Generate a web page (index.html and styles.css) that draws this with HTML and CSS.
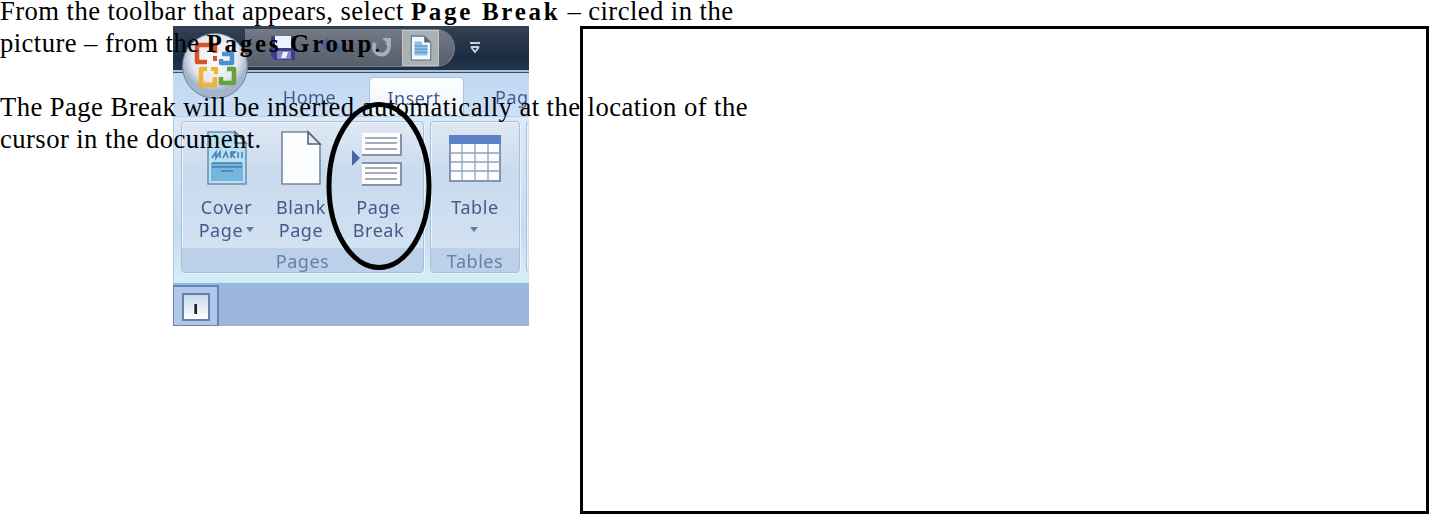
FILE: index.html
```html
<!DOCTYPE html>
<html lang="en">
<head>
<meta charset="utf-8">
<title>Inserting a Page Break</title>
<link rel="stylesheet" href="styles.css">
</head>
<body>
<main class="sheet">
  <section class="picture">
    <div class="screen">
    <header class="titlebar">
      <div class="quick">
        <svg class="save" width="28" height="28" viewBox="0 0 28 28"><path fill="#3c3c8c" d="M2 2h24v24H6l-4-4z"/><path fill="#eef2ff" d="M6 2h16v12H6z"/><path fill="#8585c2" d="M8 17h14v8H8z"/><path fill="#eef" d="M14 18h5l-2 6h-5z"/></svg>
        <svg class="undo" width="28" height="26" viewBox="0 0 28 26"><path fill="none" stroke="#4f609c" stroke-width="4" d="M6 9h10q7 0 6 10"/><path fill="#4f609c" d="M11 2v14L3 9z"/></svg>
        <svg class="redo" width="24" height="24" viewBox="0 0 24 24"><path fill="none" stroke="#a5afbe" stroke-width="4" d="M6 7a7.5 7.5 0 1 0 12-1"/><path fill="#a5afbe" d="M13 2h9v9z"/></svg>
        <span class="pinned"><svg width="22" height="26" viewBox="0 0 20 24"><path fill="#f3faff" stroke="#547386" d="M1 1h12l6 6v16H1z"/><path fill="#50687a" d="M13 1v6h6z"/><path fill="#8fc0e8" d="M4 6h7v3h5v10H4z"/><path stroke="#5f98cb" d="M4 10h12M4 13h12M4 16h12"/></svg></span>
      </div>
      <svg class="more" width="12" height="14" viewBox="0 0 12 14"><path fill="none" stroke="#c6d1df" stroke-width="2" d="M1 2h10M2 6h8M2 6l4 5 4-5"/></svg>
    </header>
    <nav class="tabs">
      <span class="tab">Home</span><span class="tab active">Insert</span><span class="tab last">Pag</span>
    </nav>
    <div class="ribbon">
      <div class="group pages">
        <div class="tools">
          <div class="tool">
            <svg width="42" height="56" viewBox="0 0 42 56"><path fill="#b9dff5" stroke="#6d8eaa" stroke-width="1.5" d="M2 2h27l11 11v41H2z"/><path fill="#e5f1fa" stroke="#596c82" stroke-width="1.5" d="M29 2v11h11z"/><path fill="#75b6df" d="M5 33h32v18H5z"/><path fill="none" stroke="#477da8" stroke-width="1.5" d="M6 28l4-6v6l4-6v6M17 28l3-6 2 6M25 28v-6h4l-3 3 3 3M32 28v-6M36 22v6M6 33h30M6 37h30M15 41h12"/></svg>
            <span>Cover<br>Page <i class="caret"></i></span>
          </div>
          <div class="tool blank">
            <svg width="42" height="56" viewBox="0 0 42 56"><path fill="#fcfdff" stroke="#77889d" stroke-width="1.6" d="M2 2h26l12 12v40H2z"/><path fill="#e4eaf4" stroke="#52647b" stroke-width="1.6" d="M28 2v12h12z"/></svg>
            <span>Blank<br>Page</span>
          </div>
          <div class="tool">
            <svg width="54" height="56" viewBox="0 0 54 56"><path fill="#fff" d="M10 3h38v22H10zM10 33h38v22H10z"/><path fill="none" stroke="#8493a6" stroke-width="2" d="M10 25h39V4M10 33h39v22H10"/><path stroke="#8792a2" stroke-width="1.5" d="M13 8h32M13 13h32M13 19h32M13 38h32M13 43h32M13 49h32"/><path fill="#4468a9" d="M0 20l8 8-8 8z"/></svg>
            <span>Page<br>Break</span>
          </div>
        </div>
        <div class="caption">Pages</div>
      </div>
      <div class="group tables">
        <div class="tools">
          <div class="tool">
            <svg width="54" height="56" viewBox="0 0 54 56"><path fill="#fbfcff" stroke="#65799b" stroke-width="1.5" d="M2 6h50v45H2z"/><path fill="#5b82c4" d="M1 5h52v9H1z"/><path fill="none" stroke="#93a1b9" stroke-width="1.3" d="M2 23h50M2 32h50M2 41h50M14 14v36M27 14v36M40 14v36"/></svg>
            <span>Table<br><i class="caret"></i></span>
          </div>
        </div>
        <div class="caption">Tables</div>
      </div>
      <div class="group next"></div>
    </div>
    <footer class="workspace"><div class="corner"><span>ı</span></div></footer>
    <svg class="orb" width="70" height="76" viewBox="0 0 70 76"><defs><radialGradient id="pearl" cy=".38"><stop offset="0" stop-color="#fff"/><stop offset=".72" stop-color="#e4e7ef"/><stop offset="1" stop-color="#a4b4cb"/></radialGradient></defs><circle cx="35" cy="38" r="32.5" fill="url(#pearl)" stroke="#6e7f9b"/><g fill="none" stroke-width="4.5" stroke-linejoin="round"><path stroke="#d8532b" d="M27 34H17V17h18v8"/><path stroke="#4d8fcf" d="M42 26h10v9H41v-4"/><path stroke="#edb532" d="M27 41h-6v16h14v-8"/><path stroke="#62a43c" d="M47 41h7v14H41v-6"/></g><g stroke-width="4"><path stroke="#d8532b" d="M35 28v5"/><path stroke="#edb532" d="M31 41h5v5"  fill="none"/></g></svg>
    </div>
    <svg class="ring" width="106" height="170" viewBox="0 0 106 170"><ellipse cx="53" cy="84" rx="50" ry="81.5" fill="none" stroke="#000" stroke-width="5"/></svg>
  </section>
  <section class="frame"></section>
  <article class="copy">
    <p class="first">From the toolbar that appears, select <b>Page Break</b> – circled in the</p>
    <p class="second">picture – from the <b>Pages Group</b>.</p>
    <p class="third">The Page Break will be inserted automatically at the location of the</p>
    <p class="fourth">cursor in the document.</p>
  </article>
</main>
</body>
</html>
```
FILE: styles.css
```css
* { box-sizing: border-box; }
body { margin: 0; background: #fff; }
.sheet { position: relative; width: 1431px; height: 517px; padding: 26px 0 0 173px; display: flex; gap: 51px; overflow: hidden; }
.picture { position: relative; width: 356px; height: 300px; flex: none; background: #c5dbf3; overflow: hidden; }
.screen { height: 300px; display: flex; flex-direction: column; font: 18px/23px "Noto Sans", "Open Sans", sans-serif; letter-spacing: .55px; color: #445a88; filter: blur(.45px); }
.frame { width: 849px; height: 488px; border: 3px solid #000; flex: none; }

.titlebar { height: 47px; flex: none; display: flex; align-items: center; padding: 0 0 3px 72px; background: linear-gradient(#354253, #1b2c42 65%, #22344c 93%, #afbdcb 94%, #afbdcb 97%, #3a4b63 97%); }
.quick { width: 210px; height: 38px; display: flex; align-items: center; padding-left: 24px; border-radius: 0 20px 20px 0; background: linear-gradient(#737985, #565e6c); border: 1px solid #768090; border-left: 0; }
.undo { margin-left: 20px; }
.redo { margin-left: 24px; }
.pinned { width: 37px; height: 36px; display: flex; align-items: center; justify-content: center; background: #abb0b5; border: 1px solid #c4c8cb; margin-left: 9px; }
.more { margin-left: 14px; }

.tabs { height: 43px; flex: none; display: flex; align-items: flex-end; padding-left: 77px; background: linear-gradient(#bfd7f2, #cce0f7); }
.tab { width: 119px; height: 39px; padding-top: 9px; text-align: center; flex: none; }
.tab.active { width: 95px; padding-right: 5px; background: linear-gradient(#fff, #eaf1fa); border: 1px solid #a9c4e1; border-bottom: 0; border-radius: 5px 5px 0 0; }
.tab.last { width: 65px; text-align: left; padding-left: 31px; }

.ribbon { height: 167px; flex: none; display: flex; gap: 6px; padding: 4px 0 7px 7px; background: linear-gradient(#dce9f6, #c6dcf1 70%, #d5edf6); border: 1px solid #b4cee5; border-right: 0; border-bottom: 3px solid #c9eef4; }
.group { flex: none; border: 1px solid #a8c0da; border-radius: 4px; background: linear-gradient(#dfe8f4, #c9daee 35%, #d5e4f4); box-shadow: 1px 1px 0 #e8f3fc, inset 1px 1px 0 #eaf2fa; display: flex; flex-direction: column; overflow: hidden; }
.pages { width: 243px; }
.tables { width: 90px; }
.next { width: 20px; }
.tools { height: 126px; flex: none; display: flex; justify-content: center; }
.tool { width: 76px; padding-top: 8px; display: flex; flex-direction: column; align-items: center; gap: 10px; text-align: center; }
.tool.blank { padding-right: 3px; }
.tool span { white-space: nowrap; }
.caret { display: inline-block; border: 4px solid transparent; border-top: 5px solid #65799b; border-bottom: 0; vertical-align: 5px; margin-left: -2px; }
.caption { flex: 1; line-height: 27px; text-align: center; color: #6680ab; background: #bcd1e9; }

.workspace { flex: 1; background: #9cb7de; padding-top: 2px; }
.corner { width: 46px; height: 42px; border: 2px solid #6682b8; border-left-width: 1px; padding: 6px 0 0 8px; background: #b1c8e8; }
.corner span { display: block; width: 28px; height: 28px; border: 2px solid #647eae; background: linear-gradient(#c8d9f1, #fff); color: #222; font-weight: bold; line-height: 25px; text-align: center; }

.orb { position: absolute; left: 7px; top: 2px; }
.ring { position: absolute; left: 153px; top: 76px; }

.copy { position: absolute; left: 0; top: -5px; color: #000; font: 26.67px/32px "Liberation Serif", serif; letter-spacing: .43px; }
.copy p { margin: 0; white-space: nowrap; }
.copy b { font-size: 25px; letter-spacing: 2.7px; line-height: 1; }
.copy .third { margin-top: 32px; }
```
